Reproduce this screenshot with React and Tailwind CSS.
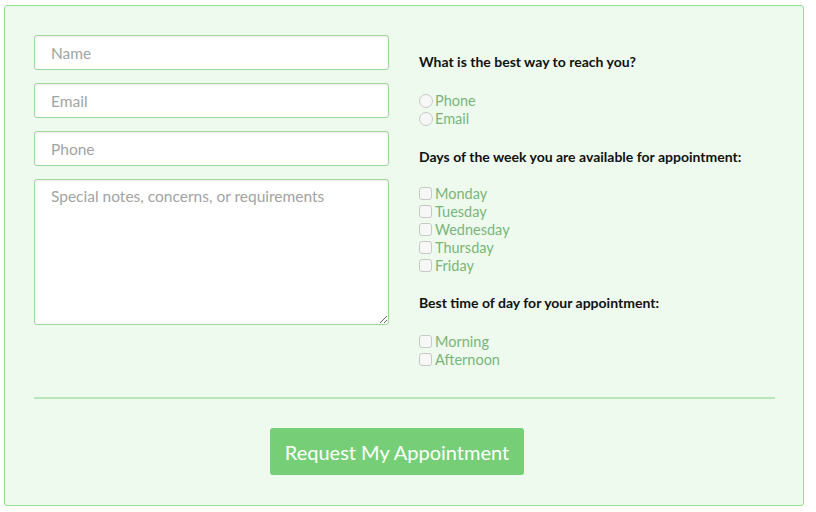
import React from 'react'

const font = { fontFamily: 'Lato, "Liberation Sans", sans-serif' }

const Check = ({ label }) => (
  <label className="flex items-center h-[18px] pt-[1px] text-[14.5px] text-[#78b678]">
    <span className="w-[13px] h-[13px] rounded-[3px] border border-[#c8c8c8] bg-[#f7f7f7] mr-[3px] shrink-0"></span>
    {label}
  </label>
)

const Radio = ({ label }) => (
  <label className="flex items-center h-[18px] pt-[1px] text-[14.5px] text-[#78b678]">
    <span className="w-[14px] h-[14px] rounded-full border border-[#c8c8c8] bg-[#f7f7f7] mr-[2px] shrink-0"></span>
    {label}
  </label>
)

const inputCls =
  'w-full h-[35px] px-4 rounded-[3px] border border-[#9ad99a] bg-white text-[15.5px] placeholder:text-[#a3a3a3] shadow-[inset_0_1px_2px_rgba(0,0,0,0.08)] outline-none'

export default function App() {
  return (
    <div className="bg-white w-[816px] h-[512px] pt-[5px] pl-[4px]" style={font}>
      <div className="w-[800px] h-[501px] border border-[#94dd94] rounded-[3px] bg-[#effaef] pt-[29px] px-[29px] pb-[30px]">
        <div className="grid grid-cols-[355px_356px] gap-x-[30px]">
          {/* Left column */}
          <div className="flex flex-col gap-[13px]">
            <input className={inputCls} placeholder="Name" />
            <input className={inputCls} placeholder="Email" />
            <input className={inputCls} placeholder="Phone" />
            <textarea
              className="w-full h-[146px] px-4 py-[5px] rounded-[3px] border border-[#9ad99a] bg-white text-[15.5px] placeholder:text-[#a3a3a3] shadow-[inset_0_1px_2px_rgba(0,0,0,0.08)] outline-none"
              placeholder="Special notes, concerns, or requirements"
            />
          </div>

          {/* Right column */}
          <div className="pt-[17px]">
            <h3 className="text-[14px] leading-[20px] font-bold text-[#111] mb-[19px]">What is the best way to reach you?</h3>
            <div className="mb-[20px]">
              <Radio label="Phone" />
              <Radio label="Email" />
            </div>
            <h3 className="text-[14px] leading-[20px] font-bold text-[#111] mb-[17px]">Days of the week you are available for appointment:</h3>
            <div className="mb-[19px]">
              <Check label="Monday" />
              <Check label="Tuesday" />
              <Check label="Wednesday" />
              <Check label="Thursday" />
              <Check label="Friday" />
            </div>
            <h3 className="text-[14px] leading-[20px] font-bold text-[#111] mb-[19px]">Best time of day for your appointment:</h3>
            <div>
              <Check label="Morning" />
              <Check label="Afternoon" />
            </div>
          </div>
        </div>

        <div className="mt-[29px] h-[2px] w-[741px] bg-[#b9e6b9]"></div>

        <div className="mt-[29px]">
          <button className="ml-[236px] w-[254px] h-[47px] rounded-[3px] bg-[#76cf76] text-white text-[20px]">
            Request My Appointment
          </button>
        </div>
      </div>
    </div>
  )
}
